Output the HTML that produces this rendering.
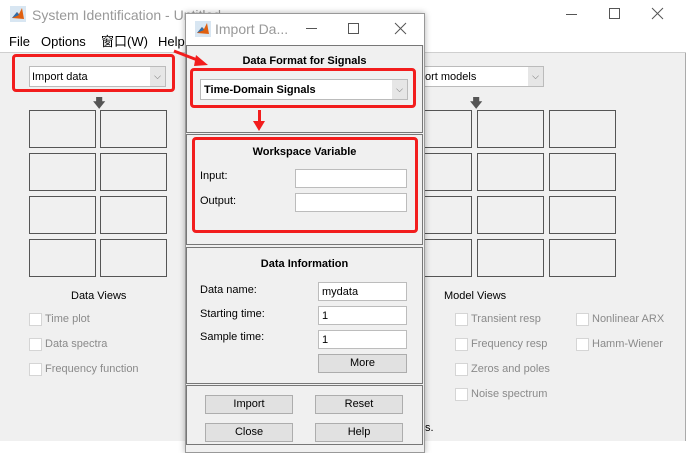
<!DOCTYPE html>
<html><head><style>
*{margin:0;padding:0;box-sizing:border-box}
body{width:687px;height:441px;overflow:hidden;background:#fff;font-family:"Liberation Sans",Arial,sans-serif;font-size:11px;color:#000;position:relative}
.a{position:absolute}
.box{position:absolute;border:1px solid #555;background:#f0f0f0;width:67px;height:38px}
.cb{position:absolute;width:13px;height:13px;border:1px solid #d5d5d5;background:#fff}
.lbl{position:absolute;color:#8a8a8a;font-size:11px}
.inp{position:absolute;background:#fff;border:1px solid #bcbcbc;font-size:11px;padding:3px 3px}
.btn{position:absolute;background:#e1e1e1;border:1px solid #adadad;text-align:center;font-size:11px;line-height:17px}
.red{position:absolute;border:3px solid #f21d1d;border-radius:4px}
.panel{position:absolute;border:1px solid #777;background:#f0f0f0}
</style></head><body>
<div class="a" style="left:0;top:0;width:686px;height:441px;background:#f0f0f0;border-right:1px solid #aaa"></div>
<div class="a" style="left:0;top:0;width:686px;height:53px;background:#fff;border-bottom:1px solid #cfcfcf"></div>
<svg class="a" style="left:10px;top:6px" width="16" height="16"><rect width="16" height="16" fill="#d8e6f2"/><path d="M2 12 L7 6 L9 8 L12 2 L14 13 Z" fill="#e06010"/><path d="M2 12 L7 6 L9 9Z" fill="#2a6fb0"/></svg>
<div class="a" style="left:32px;top:7px;font-size:14px;color:#999">System Identification - Untitled</div>
<svg class="a" style="left:560px;top:6px" width="120" height="16"><line x1="6" y1="8.5" x2="17" y2="8.5" stroke="#555"/><rect x="49.5" y="2.5" width="10" height="10" fill="none" stroke="#555"/><path d="M92 2 L103 13 M103 2 L92 13" stroke="#555"/></svg>
<div class="a" style="left:9px;top:34px;font-size:13px">File</div>
<div class="a" style="left:41px;top:34px;font-size:13px">Options</div>
<div class="a" style="left:101px;top:34px;font-size:13px;font-family:'Liberation Sans','Noto Sans CJK SC',sans-serif;line-height:15px">窗口(W)</div>
<div class="a" style="left:158px;top:34px;font-size:13px">Help</div>
<div class="a" style="left:29px;top:66px;width:137px;height:21px;background:#fff;border:1px solid #bbb;padding:4px 2px;font-size:11px">Import data</div>
<div class="a" style="left:150px;top:67px;width:15px;height:19px;background:#e6e6e6;color:#666;font-size:9px;text-align:center;line-height:19px">⌵</div>
<div class="red" style="left:12px;top:54px;width:163px;height:38px"></div>
<div class="a" style="left:93px;top:94px;color:#555;font-size:12px;font-weight:bold">🡇</div>
<div class="box" style="left:29px;top:110px"></div><div class="box" style="left:100px;top:110px"></div>
<div class="box" style="left:29px;top:153px"></div><div class="box" style="left:100px;top:153px"></div>
<div class="box" style="left:29px;top:196px"></div><div class="box" style="left:100px;top:196px"></div>
<div class="box" style="left:29px;top:239px"></div><div class="box" style="left:100px;top:239px"></div>
<div class="a" style="left:71px;top:290px">Data Views</div>
<div class="cb" style="left:29px;top:313px"></div><div class="lbl" style="left:45px;top:313px">Time plot</div>
<div class="cb" style="left:29px;top:338px"></div><div class="lbl" style="left:45px;top:338px">Data spectra</div>
<div class="cb" style="left:29px;top:363px"></div><div class="lbl" style="left:45px;top:363px">Frequency function</div>
<div class="a" style="left:410px;top:66px;width:134px;height:21px;background:#fff;border:1px solid #bbb;padding:4px 2px 3px 14px;font-size:11px">ort models</div>
<div class="a" style="left:528px;top:67px;width:15px;height:19px;background:#e6e6e6;color:#666;font-size:9px;text-align:center;line-height:19px">⌵</div>
<div class="a" style="left:470px;top:94px;color:#555;font-size:12px;font-weight:bold">🡇</div>
<div class="box" style="left:405px;top:110px"></div><div class="box" style="left:477px;top:110px"></div><div class="box" style="left:549px;top:110px"></div>
<div class="box" style="left:405px;top:153px"></div><div class="box" style="left:477px;top:153px"></div><div class="box" style="left:549px;top:153px"></div>
<div class="box" style="left:405px;top:196px"></div><div class="box" style="left:477px;top:196px"></div><div class="box" style="left:549px;top:196px"></div>
<div class="box" style="left:405px;top:239px"></div><div class="box" style="left:477px;top:239px"></div><div class="box" style="left:549px;top:239px"></div>
<div class="a" style="left:444px;top:290px">Model Views</div>
<div class="cb" style="left:455px;top:313px"></div><div class="lbl" style="left:471px;top:313px">Transient resp</div>
<div class="cb" style="left:455px;top:338px"></div><div class="lbl" style="left:471px;top:338px">Frequency resp</div>
<div class="cb" style="left:455px;top:363px"></div><div class="lbl" style="left:471px;top:363px">Zeros and poles</div>
<div class="cb" style="left:455px;top:388px"></div><div class="lbl" style="left:471px;top:388px">Noise spectrum</div>
<div class="cb" style="left:576px;top:313px"></div><div class="lbl" style="left:592px;top:313px">Nonlinear ARX</div>
<div class="cb" style="left:576px;top:338px"></div><div class="lbl" style="left:592px;top:338px">Hamm-Wiener</div>
<div class="a" style="left:425px;top:422px;font-size:11px">s.</div>
<div class="a" style="left:185px;top:13px;width:240px;height:440px;background:#f0f0f0;border:1px solid #999;box-shadow:0 0 6px rgba(0,0,0,.3)"></div>
<div class="a" style="left:186px;top:14px;width:238px;height:31px;background:#fff"></div>
<svg class="a" style="left:195px;top:21px" width="16" height="16"><rect width="16" height="16" fill="#d8e6f2"/><path d="M2 12 L7 6 L9 8 L12 2 L14 13 Z" fill="#e06010"/><path d="M2 12 L7 6 L9 9Z" fill="#2a6fb0"/></svg>
<div class="a" style="left:215px;top:21px;font-size:14px;color:#999">Import Da...</div>
<svg class="a" style="left:300px;top:21px" width="110" height="16"><line x1="6" y1="7.5" x2="17" y2="7.5" stroke="#555"/><rect x="48.5" y="2.5" width="10" height="10" fill="none" stroke="#555"/><path d="M95 2 L106 13 M106 2 L95 13" stroke="#555"/></svg>
<div class="panel" style="left:186px;top:45px;width:237px;height:88px"></div>
<div class="a" style="left:186px;top:55px;width:237px;text-align:center;font-weight:bold">Data Format for Signals</div>
<div class="a" style="left:200px;top:79px;width:208px;height:21px;background:#fff;border:1px solid #bbb;padding:4px 3px;font-weight:bold">Time-Domain Signals</div>
<div class="a" style="left:392px;top:80px;width:15px;height:19px;background:#e6e6e6;color:#666;font-size:9px;text-align:center;line-height:19px">⌵</div>
<div class="red" style="left:190px;top:68px;width:226px;height:40px"></div>
<div class="a" style="left:258px;top:110px;width:3px;height:14px;background:#f21d1d"></div>
<div class="a" style="left:253px;top:121px;width:0;height:0;border-left:6px solid transparent;border-right:6px solid transparent;border-top:10px solid #f21d1d"></div>
<svg class="a" style="left:172px;top:48px" width="40" height="22"><line x1="2" y1="3" x2="28" y2="13" stroke="#f21d1d" stroke-width="3"/><path d="M24 7 L36 17 L22 18Z" fill="#f21d1d"/></svg>
<div class="panel" style="left:186px;top:134px;width:237px;height:111px"></div>
<div class="a" style="left:186px;top:146px;width:237px;text-align:center;font-weight:bold">Workspace Variable</div>
<div class="a" style="left:200px;top:170px">Input:</div>
<div class="a" style="left:200px;top:195px">Output:</div>
<div class="inp" style="left:295px;top:169px;width:112px;height:19px"></div>
<div class="inp" style="left:295px;top:193px;width:112px;height:19px"></div>
<div class="red" style="left:192px;top:137px;width:226px;height:96px"></div>
<div class="panel" style="left:186px;top:247px;width:237px;height:137px"></div>
<div class="a" style="left:186px;top:258px;width:237px;text-align:center;font-weight:bold">Data Information</div>
<div class="a" style="left:200px;top:284px">Data name:</div>
<div class="a" style="left:200px;top:308px">Starting time:</div>
<div class="a" style="left:200px;top:331px">Sample time:</div>
<div class="inp" style="left:318px;top:282px;width:89px;height:19px">mydata</div>
<div class="inp" style="left:318px;top:306px;width:89px;height:19px">1</div>
<div class="inp" style="left:318px;top:330px;width:89px;height:19px">1</div>
<div class="btn" style="left:318px;top:354px;width:89px;height:19px">More</div>
<div class="panel" style="left:186px;top:385px;width:237px;height:60px"></div>
<div class="btn" style="left:205px;top:395px;width:88px;height:19px">Import</div>
<div class="btn" style="left:315px;top:395px;width:88px;height:19px">Reset</div>
<div class="btn" style="left:205px;top:423px;width:88px;height:19px">Close</div>
<div class="btn" style="left:315px;top:423px;width:88px;height:19px">Help</div>
</body></html>
